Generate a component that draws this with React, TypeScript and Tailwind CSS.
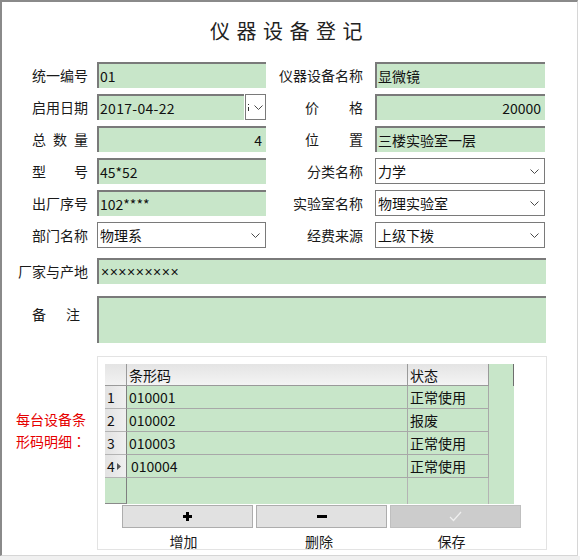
import React from 'react'

const FONT = "font-['Noto_Sans_CJK_SC',sans-serif]"

const Chevron = () => (
  <svg width="9" height="5" viewBox="0 0 9 5" className="shrink-0">
    <polyline points="0.5,0.5 4.5,4.5 8.5,0.5" fill="none" stroke="#4a4a4a" strokeWidth="1" />
  </svg>
)

const Spread = ({ text, width }: { text: string; width: string }): React.JSX.Element => (
  <span className={`flex justify-between ${width}`}>
    {text.split('').map((c, i) => (
      <span key={i}>{c}</span>
    ))}
  </span>
)

const TextBox = ({ value, right = false }: { value: React.ReactNode; right?: boolean }): React.JSX.Element => (
  <div
    className={`flex h-[26px] w-full items-center border-t-2 border-l-2 border-[#7a7a7a] bg-[#c8e6c9] text-[14px] leading-none text-[#111] ${
      right ? 'justify-end pr-[4px]' : 'pl-[1px]'
    }`}
  >
    {value}
  </div>
)

const Select = ({ value }: { value: string }): React.JSX.Element => (
  <div className="flex h-[26px] w-full items-center justify-between border border-[#7a7a7a] bg-white pl-[2px] pr-[5px] text-[14px] leading-none text-[#111]">
    <span>{value}</span>
    <Chevron />
  </div>
)

const Row = ({
  left,
  leftField,
  right,
  rightField,
}: {
  left: React.ReactNode
  leftField: React.ReactNode
  right: React.ReactNode
  rightField: React.ReactNode
}): React.JSX.Element => (
  <div className="flex h-[26px] items-center text-[14px] leading-none text-[#1a1a1a]">
    <div className="flex w-[86px] justify-end">{left}</div>
    <div className="ml-[9px] w-[169px]">{leftField}</div>
    <div className="flex w-[98px] justify-end pr-[1px]">{right}</div>
    <div className="ml-[11px] w-[170px]">{rightField}</div>
  </div>
)

const barcodes = [
  { code: '010001', state: '正常使用' },
  { code: '010002', state: '报废' },
  { code: '010003', state: '正常使用' },
  { code: '010004', state: '正常使用' },
]

const App = (): React.JSX.Element => {
  return (
    <div className={`w-[580px] h-[560px] bg-white ${FONT}`}>
      <div className="flex h-[556px] w-[578px] flex-col border-t-2 border-l-2 border-r border-b border-t-[#8a8a8a] border-l-[#8a8a8a] border-r-[#d6d6d6] border-b-[#d6d6d6]">
        <div className="flex h-[58px] items-center justify-center text-[20px] leading-none tracking-[6.5px] text-[#222]">
          仪器设备登记
        </div>

        <div className="mt-[2px] flex flex-col gap-[6px]">
          <Row left="统一编号" leftField={<TextBox value="01" />} right="仪器设备名称" rightField={<TextBox value="显微镜" />} />
          <Row
            left="启用日期"
            leftField={
              <div className="flex h-[26px] w-full">
                <div className="w-[147px]">
                  <TextBox value={<span className="tracking-[0.3px]">2017-04-22</span>} />
                </div>
                <div className="ml-[1px] flex h-[26px] flex-1 items-center border border-[#7a7a7a] bg-white">
                  <div className="ml-[2px] flex h-[8px] w-[1px] flex-col justify-between pt-[1px]">
                    <div className="h-[1px] w-[1px] bg-[#333]" />
                    <div className="h-[4px] w-[1px] bg-[#333]" />
                  </div>
                  <div className="ml-[5px]">
                    <Chevron />
                  </div>
                </div>
              </div>
            }
            right={<Spread text="价格" width="w-[58px]" />}
            rightField={<TextBox value="20000" right />}
          />
          <Row
            left={<Spread text="总数量" width="w-[56px]" />}
            leftField={<TextBox value="4" right />}
            right={<Spread text="位置" width="w-[58px]" />}
            rightField={<TextBox value="三楼实验室一层" />}
          />
          <Row
            left={<Spread text="型号" width="w-[56px]" />}
            leftField={<TextBox value="45*52" />}
            right="分类名称"
            rightField={<Select value="力学" />}
          />
          <Row left="出厂序号" leftField={<TextBox value="102****" />} right="实验室名称" rightField={<Select value="物理实验室" />} />
          <Row left="部门名称" leftField={<Select value="物理系" />} right="经费来源" rightField={<Select value="上级下拨" />} />
        </div>

        <div className="mt-[10px] flex h-[26px] items-center text-[14px] leading-none text-[#1a1a1a]">
          <div className="flex w-[86px] justify-end">厂家与产地</div>
          <div className="ml-[9px] w-[449px]">
            <TextBox
              value={
                <span className="pl-[1px] font-['Liberation_Sans',sans-serif] text-[14px] tracking-[0.5px]">×××××××××</span>
              }
            />
          </div>
        </div>

        <div className="mt-[12px] flex h-[47px] text-[14px] leading-none text-[#1a1a1a]">
          <div className="flex w-[86px] justify-end pt-[11px] pr-[8px]">
            <Spread text="备注" width="w-[48px]" />
          </div>
          <div className="ml-[9px] h-[47px] w-[449px] border-t-2 border-l-2 border-[#7a7a7a] bg-[#c8e6c9]" />
        </div>

        <div className="mt-[13px] flex">
          <div className="w-[95px] pt-[52px] pl-[14px] text-[14px] leading-[22px] text-[#e60000]">
            <div>每台设备条</div>
            <div>
              形码明细<span className="font-['Noto_Sans_CJK_TC',sans-serif]">：</span>
            </div>
          </div>

          <div className="h-[194px] w-[450px] border border-[#e3e3e3] bg-white pt-[7px] pl-[7px]">
            <div className="flex h-[140px] w-[409px] flex-col bg-[#c8e6c9] text-[14px] leading-none text-[#111]">
              <div className="flex h-[22px] shrink-0">
                <div className="w-[22px] border-r border-b border-[#9a9a9a] bg-linear-to-b from-[#e4e4e4] to-[#f2f2f2]" />
                <div className="flex w-[281px] items-center border-r border-b border-[#9a9a9a] bg-linear-to-b from-[#e4e4e4] to-[#f4f4f4] pl-[2px]">
                  条形码
                </div>
                <div className="flex w-[81px] items-center border-r border-b border-[#9a9a9a] bg-linear-to-b from-[#e4e4e4] to-[#f4f4f4] pl-[2px]">
                  状态
                </div>
                <div className="flex-1 border-r border-[#6e6e6e]" />
              </div>

              {barcodes.map((b, i) => (
                <div key={b.code} className="flex h-[23px] shrink-0">
                  <div className="flex w-[22px] items-center border-r border-b border-r-[#7f7f7f] border-b-[#b4b4b4] bg-linear-to-r from-[#e2e2e2] to-[#f0f0f0] pl-[2px]">
                    <span>{i + 1}</span>
                    {i === barcodes.length - 1 && (
                      <svg width="4" height="7" viewBox="0 0 4 7" className="ml-[2px]">
                        <polygon points="0,0 4,3.5 0,7" fill="#555" />
                      </svg>
                    )}
                  </div>
                  <div
                    className={`flex w-[281px] items-center border-r border-b border-[#a8a8a8] ${
                      i === barcodes.length - 1 ? 'pl-[4px]' : 'pl-[2px]'
                    }`}
                  >
                    {b.code}
                  </div>
                  <div className="flex w-[81px] items-center border-r border-b border-[#a8a8a8] pl-[2px]">{b.state}</div>
                  <div className="flex-1" />
                </div>
              ))}

              <div className="flex flex-1">
                <div className="w-[22px] border-r border-b border-r-[#7f7f7f] border-b-[#8a8a8a]" />
                <div className="w-[281px] border-r border-[#b4b4b4]" />
                <div className="w-[81px] border-r border-[#b4b4b4]" />
                <div className="flex-1" />
              </div>
            </div>

            <div className="mt-[1px] ml-[17px] flex gap-[3px]">
              <div className="flex h-[23px] w-[131px] items-center justify-center border border-[#adadad] bg-[#e1e1e1]">
                <svg width="9" height="9" viewBox="0 0 9 9">
                  <rect x="3" y="0" width="3" height="9" fill="#000" />
                  <rect x="0" y="3" width="9" height="3" fill="#000" />
                </svg>
              </div>
              <div className="flex h-[23px] w-[131px] items-center justify-center border border-[#adadad] bg-[#e1e1e1]">
                <svg width="10" height="3" viewBox="0 0 10 3">
                  <rect x="0" y="0" width="10" height="3" fill="#000" />
                </svg>
              </div>
              <div className="flex h-[23px] w-[131px] items-center justify-center border border-[#bfbfbf] bg-[#cccccc]">
                <svg width="13" height="11" viewBox="0 0 13 11">
                  <polyline points="1,6 4.5,9.5 12,1" fill="none" stroke="#efefef" strokeWidth="1.2" />
                </svg>
              </div>
            </div>

            <div className="ml-[17px] flex gap-[3px] pt-[6px] text-[14px] leading-[14px] text-[#1a1a1a]">
              <div className="w-[131px] pr-[8px] text-center">增加</div>
              <div className="w-[131px] pr-[5px] text-center">删除</div>
              <div className="w-[131px] pr-[8px] text-center">保存</div>
            </div>
          </div>
        </div>
      </div>
      <div className="h-[4px] w-[580px] bg-[#f0f0f0]" />
    </div>
  )
}

export default App
